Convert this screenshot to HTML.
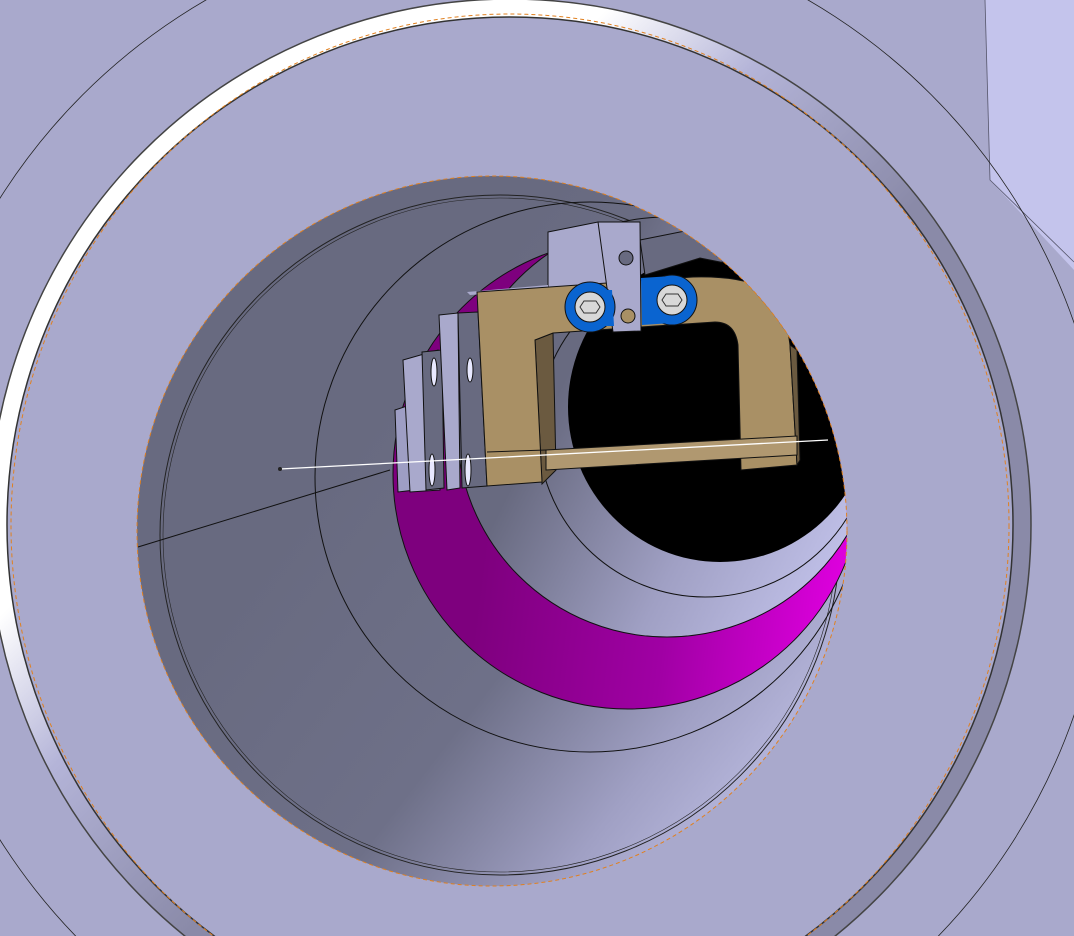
<!DOCTYPE html>
<html><head><meta charset="utf-8"><style>
html,body{margin:0;padding:0;width:1074px;height:936px;overflow:hidden;background:#a9a9cc}
svg{display:block}
</style></head><body>
<svg width="1074" height="936" viewBox="0 0 1074 936" xmlns="http://www.w3.org/2000/svg">
<defs>
<linearGradient id="bore" x1="0.2" y1="0.5" x2="0.85" y2="1">
<stop offset="0" stop-color="#686a80"/><stop offset="0.45" stop-color="#6e7088"/><stop offset="0.75" stop-color="#a0a0c4"/><stop offset="1" stop-color="#c0c0e6"/></linearGradient>
<linearGradient id="mag" x1="0.2" y1="0.6" x2="1" y2="0.7">
<stop offset="0" stop-color="#7e007e"/><stop offset="0.5" stop-color="#a000a4"/><stop offset="1" stop-color="#e400e4"/></linearGradient>
<linearGradient id="inner" x1="0.2" y1="0.5" x2="0.9" y2="0.85">
<stop offset="0" stop-color="#686a80"/><stop offset="0.55" stop-color="#a0a0c4"/><stop offset="1" stop-color="#c0c0e8"/></linearGradient>
<linearGradient id="band" gradientUnits="userSpaceOnUse" x1="300" y1="100" x2="900" y2="700">
<stop offset="0" stop-color="#ffffff"/><stop offset="0.18" stop-color="#ffffff"/><stop offset="0.35" stop-color="#b4b4d8"/><stop offset="0.5" stop-color="#9a9abb"/><stop offset="0.6" stop-color="#8a8aa8"/><stop offset="1" stop-color="#8a8aa8"/></linearGradient>
<clipPath id="bc"><circle cx="492" cy="531" r="355"/></clipPath>
</defs>
<rect width="1074" height="936" fill="#a9a9cc"/>
<polygon points="985,0 1074,0 1074,270 990,180" fill="#c4c4ec"/>
<polyline points="985,0 990,180 1074,262" fill="none" stroke="#55556a" stroke-width="0.8"/>
<!-- flange rings -->
<circle cx="507" cy="519" r="600" fill="none" stroke="#222" stroke-width="0.8"/>
<ellipse cx="510" cy="525" rx="512" ry="517" fill="none" stroke="url(#band)" stroke-width="18"/>
<ellipse cx="510" cy="525" rx="521" ry="526" fill="none" stroke="#444" stroke-width="1.5"/>
<ellipse cx="510" cy="525" rx="503" ry="508" fill="none" stroke="#333" stroke-width="1.5"/>
<ellipse cx="510" cy="525" rx="499" ry="511" fill="none" stroke="#e08020" stroke-width="1" stroke-dasharray="4 3"/>
<!-- bore -->
<circle cx="492" cy="531" r="355" fill="url(#bore)"/>
<g clip-path="url(#bc)">
<circle cx="500" cy="535" r="340" fill="none" stroke="#222" stroke-width="1"/>
<circle cx="500" cy="535" r="337" fill="none" stroke="#222" stroke-width="0.6"/>
<circle cx="590" cy="477" r="275" fill="none" stroke="#111" stroke-width="1"/>
<circle cx="628" cy="474" r="235" fill="url(#mag)" stroke="#111" stroke-width="1"/>
<circle cx="667" cy="427" r="210" fill="url(#inner)" stroke="#111" stroke-width="1"/>
<circle cx="705" cy="430" r="167" fill="none" stroke="#111" stroke-width="1"/>
<ellipse cx="720" cy="407" rx="152" ry="155" fill="#000"/>
<line x1="138" y1="547" x2="390" y2="470" stroke="#111" stroke-width="1"/>
<!-- upper grey blocks -->
<polygon points="548,232 598,222 640,222 640,282 548,288" fill="#a9a9cc" stroke="#111" stroke-width="1"/>
<polygon points="467,292 548,285 548,290 470,295" fill="#a9a9cc"/>
<polygon points="640,240 700,228 760,240 800,270 720,262 700,258 645,275" fill="#686a80" stroke="#111" stroke-width="1"/>
<!-- side plates -->
<polygon points="395,410 410,405 415,490 398,492" fill="#9e9ec4" stroke="#111" stroke-width="1"/>
<polygon points="403,360 438,350 440,490 410,492" fill="#a9a9cc" stroke="#111" stroke-width="1"/>
<polygon points="422,352 442,350 444,488 426,490" fill="#686a80" stroke="#111" stroke-width="1"/>
<polygon points="439,315 458,313 460,488 447,490" fill="#a9a9cc" stroke="#111" stroke-width="1"/>
<polygon points="458,313 478,312 487,486 462,488" fill="#686a80" stroke="#111" stroke-width="1"/>
<ellipse cx="434" cy="372" rx="3" ry="14" fill="#e8e8ff" stroke="#111"/>
<ellipse cx="470" cy="370" rx="3" ry="12" fill="#e8e8ff" stroke="#111"/>
<ellipse cx="432" cy="470" rx="3" ry="16" fill="#e8e8ff" stroke="#111"/>
<ellipse cx="468" cy="470" rx="3" ry="16" fill="#e8e8ff" stroke="#111"/>
<!-- tan bracket -->
<polygon points="535,340 553,333 556,470 542,484" fill="#6b5a40" stroke="#111" stroke-width="1"/>
<path d="M477,292 L693,277 Q770,275 785,310 L790,345 L797,465 L741,470 L738,345 Q735,322 715,322 L553,333 L535,340 L542,482 L487,486 Z" fill="#a99065" stroke="#111" stroke-width="1"/>
<polygon points="790,345 797,350 800,460 797,465" fill="#6b5a40" stroke="#111"/>
<polygon points="546,450 797,436 797,455 546,470" fill="#b09870" stroke="#111" stroke-width="1"/>
<line x1="487" y1="452" x2="546" y2="450" stroke="#111"/>
<!-- centre plate -->
<polygon points="598,222 640,222 641,331 613,332" fill="#a9a9cc" stroke="#111" stroke-width="1"/>
<circle cx="626" cy="258" r="7" fill="#686a80" stroke="#111"/>
<circle cx="628" cy="316" r="7" fill="#a99065" stroke="#111"/>
<!-- blue lugs -->
<circle cx="590" cy="307" r="25" fill="#0a64d0" stroke="#111"/>
<polygon points="598,290 612,290 614,326 598,326" fill="#0a64d0"/>
<circle cx="590" cy="307" r="15" fill="#d8d8d8" stroke="#111"/>
<polygon points="584,301 596,301 600,307 596,313 584,313 580,307" fill="none" stroke="#333"/>
<circle cx="672" cy="300" r="25" fill="#0a64d0" stroke="#111"/>
<polygon points="641,278 672,276 672,323 642,325" fill="#0a64d0"/>
<circle cx="672" cy="300" r="15" fill="#d8d8d8" stroke="#111"/>
<polygon points="666,294 678,294 682,300 678,306 666,306 662,300" fill="none" stroke="#333"/>
<line x1="280" y1="469" x2="828" y2="440" stroke="#fff" stroke-width="1.3"/>
<circle cx="280" cy="469" r="2" fill="#222"/>
</g>
<circle cx="492" cy="531" r="355" fill="none" stroke="#e08020" stroke-width="1" stroke-dasharray="4 3"/>
</svg>
</body></html>
